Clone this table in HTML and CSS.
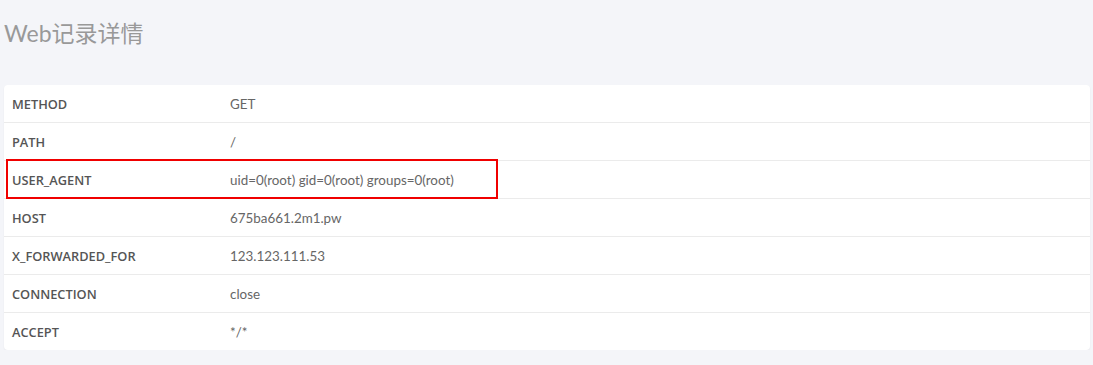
FILE: index.html
```html
<!DOCTYPE html>
<html>
<head>
<meta charset="utf-8">
<link rel="stylesheet" href="styles.css">
</head>
<body>
<div class="page">
  <h1 class="title">Web记录详情</h1>
  <div class="card">
    <div class="row"><div class="key">METHOD</div><div class="val">GET</div></div>
    <div class="row"><div class="key">PATH</div><div class="val">/</div></div>
    <div class="row"><div class="key">USER_AGENT</div><div class="val">uid=0(root) gid=0(root) groups=0(root)</div></div>
    <div class="row"><div class="key">HOST</div><div class="val">675ba661.2m1.pw</div></div>
    <div class="row"><div class="key">X_FORWARDED_FOR</div><div class="val">123.123.111.53</div></div>
    <div class="row"><div class="key">CONNECTION</div><div class="val">close</div></div>
    <div class="row"><div class="key">ACCEPT</div><div class="val">*/*</div></div>
    <div class="highlight"></div>
  </div>
</div>
</body>
</html>
```
FILE: styles.css
```css
html, body {
  margin: 0;
  padding: 0;
  background: #f4f5f9;
  font-family: Lato, "Open Sans", "Noto Sans CJK SC", sans-serif;
}
.page {
  padding: 18px 3px 0 4px;
}
.title {
  margin: 0;
  font-size: 23px;
  line-height: 30px;
  font-weight: 400;
  color: #999;
  font-family: Lato, "Noto Sans CJK SC", sans-serif;
}
.card {
  position: relative;
  margin-top: 37px;
  background: #fff;
  border-radius: 4px;
  box-shadow: 0 1px 2px rgba(0,0,0,0.05);
}
.row {
  display: flex;
  align-items: center;
  height: 37px;
  border-top: 1px solid #ebebeb;
  font-size: 13px;
}
.row:first-child {
  border-top: none;
}
.key {
  width: 218px;
  padding-left: 8px;
  font-family: "Open Sans", Lato, sans-serif;
  font-size: 12.8px;
  font-weight: 600;
  color: #555;
}
.val {
  font-size: 13.4px;
  color: #666;
}
.highlight {
  position: absolute;
  left: 2px;
  top: 74px;
  width: 488px;
  height: 36px;
  border: 2px solid #f00000;
}
```
